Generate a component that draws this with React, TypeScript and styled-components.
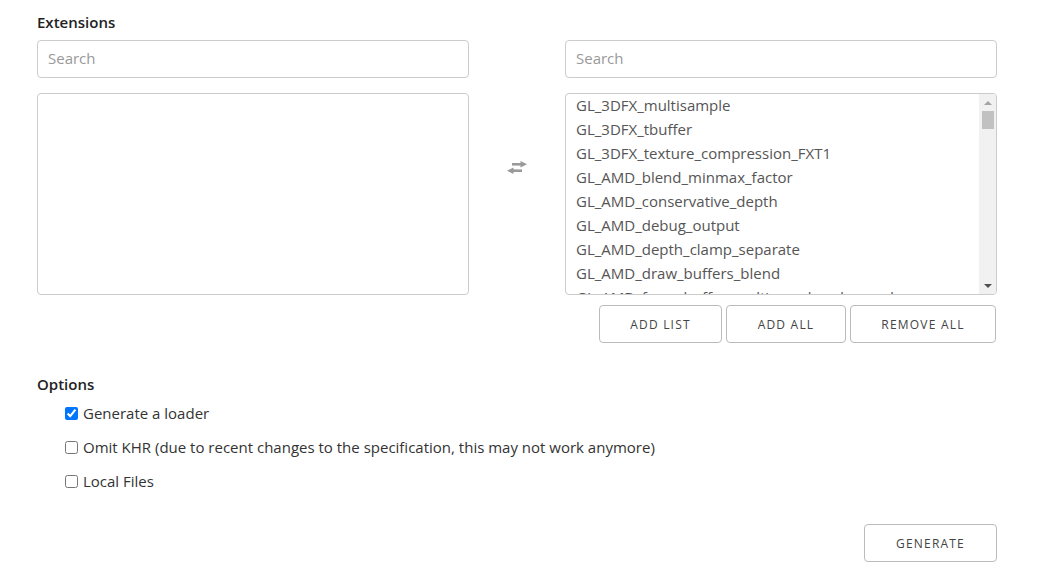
import styled, { createGlobalStyle } from "styled-components"

const GlobalStyle = createGlobalStyle`
  body {
    margin: 0;
    background: #fff;
    font-family: "Open Sans", "Liberation Sans", sans-serif;
    color: #333;
  }
`

const Page = styled.div`
  width: 960px;
  padding: 12px 0 0 37px;
`

const Heading = styled.div`
  font-size: 15px;
  font-weight: 600;
  color: #222;
  line-height: 20px;
  margin-bottom: 8px;
`

const Columns = styled.div`
  display: grid;
  grid-template-columns: 432px 1fr 432px;
  align-items: start;
`

const Column = styled.div`
  display: flex;
  flex-direction: column;
`

const SearchInput = styled.input`
  box-sizing: border-box;
  height: 38px;
  width: 100%;
  border: 1px solid #ccc;
  border-radius: 4px;
  padding: 0 10px 2px;
  font-family: inherit;
  font-size: 15px;
  color: #555;
  margin-bottom: 15px;
  &::placeholder {
    color: #999;
  }
`

const ListBox = styled.div`
  box-sizing: border-box;
  height: 202px;
  border: 1px solid #ccc;
  border-radius: 4px;
  display: flex;
  overflow: hidden;
`

const ListItems = styled.div`
  flex: 1;
  overflow: hidden;
  padding: 0 10px;
  margin-top: -1px;
`

const ListItem = styled.div`
  font-size: 15px;
  line-height: 24px;
  color: #555;
  white-space: nowrap;
`

const Scrollbar = styled.div`
  width: 17px;
  background: #f1f1f1;
  display: flex;
  flex-direction: column;
  align-items: center;
`

const ScrollArrow = styled.div<{ $up?: boolean }>`
  height: 17px;
  display: flex;
  align-items: center;
  justify-content: center;
  &::after {
    content: "";
    border-left: 4px solid transparent;
    border-right: 4px solid transparent;
    ${(p) => (p.$up ? "border-bottom: 4px solid #a3a3a3;" : "border-top: 4px solid #505050;")}
  }
`

const ScrollTrack = styled.div`
  flex: 1;
  width: 100%;
  display: flex;
  justify-content: center;
`

const ScrollThumb = styled.div`
  width: 12px;
  height: 18px;
  background: #c1c1c1;
`

const Middle = styled.div`
  height: 254px;
  display: flex;
  align-items: center;
  justify-content: center;
`

const ExchangeIcon = () => (
  <svg width="20" height="13" viewBox="0 0 20 13">
    <g fill="#9a9a9a">
      <rect x="5" y="2" width="9.5" height="2.6" />
      <polygon points="13.5,0 20,3.3 13.5,6.6" />
      <rect x="5.5" y="8.4" width="9.5" height="2.6" />
      <polygon points="6.5,6.4 0,9.7 6.5,13" />
    </g>
  </svg>
)

const ButtonRow = styled.div`
  display: flex;
  justify-content: flex-end;
  gap: 4px;
  margin-top: 10px;
  margin-right: 1px;
`

const Button = styled.button<{ $w: number }>`
  box-sizing: border-box;
  width: ${(p) => p.$w}px;
  height: 38px;
  background: #fff;
  border: 1px solid #bbb;
  border-radius: 4px;
  font-family: inherit;
  font-size: 12px;
  font-weight: 400;
  letter-spacing: 1.2px;
  color: #444;
  text-transform: uppercase;
`

const OptionsHeading = styled(Heading)`
  margin-top: 31px;
  margin-bottom: 2px;
`

const OptionRow = styled.label`
  display: flex;
  align-items: center;
  gap: 5px;
  height: 34px;
  padding-left: 28px;
  font-size: 15px;
  color: #333;
  input {
    margin: 0;
    width: 13px;
    height: 13px;
  }
`

const Footer = styled.div`
  display: flex;
  justify-content: flex-end;
  margin-top: 26px;
`

const extensions = [
  "GL_3DFX_multisample",
  "GL_3DFX_tbuffer",
  "GL_3DFX_texture_compression_FXT1",
  "GL_AMD_blend_minmax_factor",
  "GL_AMD_conservative_depth",
  "GL_AMD_debug_output",
  "GL_AMD_depth_clamp_separate",
  "GL_AMD_draw_buffers_blend",
  "GL_AMD_framebuffer_multisample_advanced",
]

const App = () => {
  return <Page>
    <GlobalStyle />
    <Heading>Extensions</Heading>
    <Columns>
      <Column>
        <SearchInput placeholder="Search" />
        <ListBox />
      </Column>
      <Middle>
        <ExchangeIcon />
      </Middle>
      <Column>
        <SearchInput placeholder="Search" />
        <ListBox>
          <ListItems>
            {extensions.map((name) => <ListItem key={name}>{name}</ListItem>)}
          </ListItems>
          <Scrollbar>
            <ScrollArrow $up />
            <ScrollTrack><ScrollThumb /></ScrollTrack>
            <ScrollArrow />
          </Scrollbar>
        </ListBox>
        <ButtonRow>
          <Button $w={123}>Add list</Button>
          <Button $w={120}>Add all</Button>
          <Button $w={146}>Remove all</Button>
        </ButtonRow>
      </Column>
    </Columns>
    <OptionsHeading>Options</OptionsHeading>
    <OptionRow><input type="checkbox" defaultChecked />Generate a loader</OptionRow>
    <OptionRow><input type="checkbox" />Omit KHR (due to recent changes to the specification, this may not work anymore)</OptionRow>
    <OptionRow><input type="checkbox" />Local Files</OptionRow>
    <Footer>
      <Button $w={133}>Generate</Button>
    </Footer>
  </Page>
}

export default App
